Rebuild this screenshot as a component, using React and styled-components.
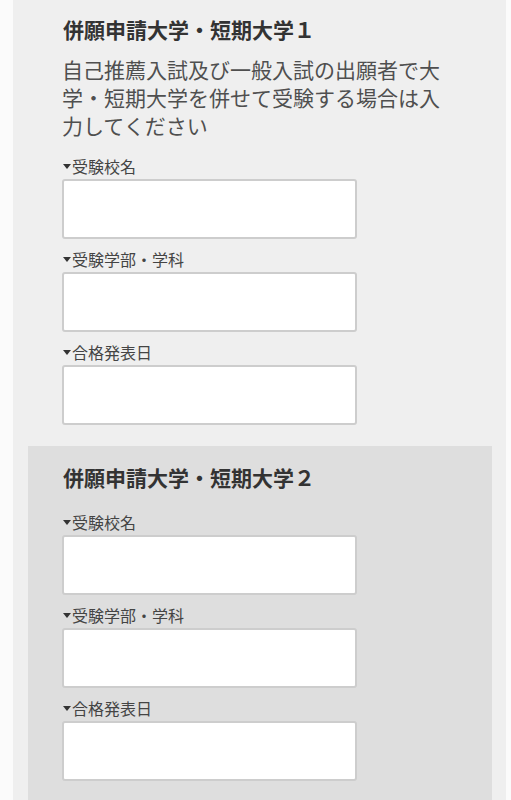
import React from 'react';
import styled, { createGlobalStyle } from 'styled-components';

const GlobalStyle = createGlobalStyle`
    body {
        margin: 0;
        background: #fbfbfb;
        font-family: "Noto Sans CJK JP", "Noto Sans", sans-serif;
        color: #333;
    }
`;

const sections = [
    {
        title: '併願申請大学・短期大学１',
        note: '自己推薦入試及び一般入試の出願者で大学・短期大学を併せて受験する場合は入力してください',
        shaded: false,
    },
    { title: '併願申請大学・短期大学２', shaded: true },
];

const fields = ['受験校名', '受験学部・学科', '合格発表日'];

/**
 * Component that renders the joint application form.
 */
const App = () => (
    <Page>
        <GlobalStyle />
        <Panel>
            {sections.map(section => (
                <Section key={section.title} shaded={section.shaded}>
                    <Title>{section.title}</Title>
                    {section.note && <Note>{section.note}</Note>}
                    <Fields>
                        {fields.map(field => (
                            <Field key={field}>
                                <Label>{field}</Label>
                                <Input type="text" />
                            </Field>
                        ))}
                    </Fields>
                </Section>
            ))}
        </Panel>
    </Page>
);

const Page = styled.div`
    min-height: 800px;
    padding-left: 13px;
`;

/**
 * The light grey form panel.
 */
const Panel = styled.div`
    width: 493px;
    min-height: 800px;
    background: #efefef;
    padding-top: 14px;
    box-sizing: border-box;
    display: flex;
    flex-direction: column;
    gap: 21px;
`;

const Section = styled.section`
    margin-left: ${p => (p.shaded ? '15px' : '0')};
    width: ${p => (p.shaded ? '464px' : 'auto')};
    padding: ${p => (p.shaded ? '16px 0 30px 34px' : '0 0 0 49px')};
    background: ${p => (p.shaded ? '#dedede' : 'transparent')};
    box-sizing: border-box;
`;

const Title = styled.h2`
    margin: 0 0 0 1px;
    font-size: 21px;
    line-height: 30px;
    font-weight: 700;
    color: #333;
`;

const Note = styled.p`
    margin: 11px 0 0 0;
    width: 392px;
    font-size: 21px;
    line-height: 28px;
    color: #4f4f4f;
`;

const Fields = styled.div`
    margin-top: 17px;
    display: flex;
    flex-direction: column;
    gap: 10px;

    ${Title} + & {
        margin-top: 20px;
    }
`;

const Field = styled.div`
    display: flex;
    flex-direction: column;
    gap: 3px;
`;

const Label = styled.label`
    display: flex;
    align-items: center;
    font-size: 16px;
    line-height: 20px;
    color: #444;

    &::before {
        content: '';
        width: 0;
        height: 0;
        margin: 0 1px 0 1px;
        border-left: 4px solid transparent;
        border-right: 4px solid transparent;
        border-top: 5px solid #333;
    }
`;

const Input = styled.input`
    width: 295px;
    height: 60px;
    box-sizing: border-box;
    border: 2px solid #cdcdcd;
    border-radius: 3px;
    background: #fff;
    outline: none;
`;

export default App;
